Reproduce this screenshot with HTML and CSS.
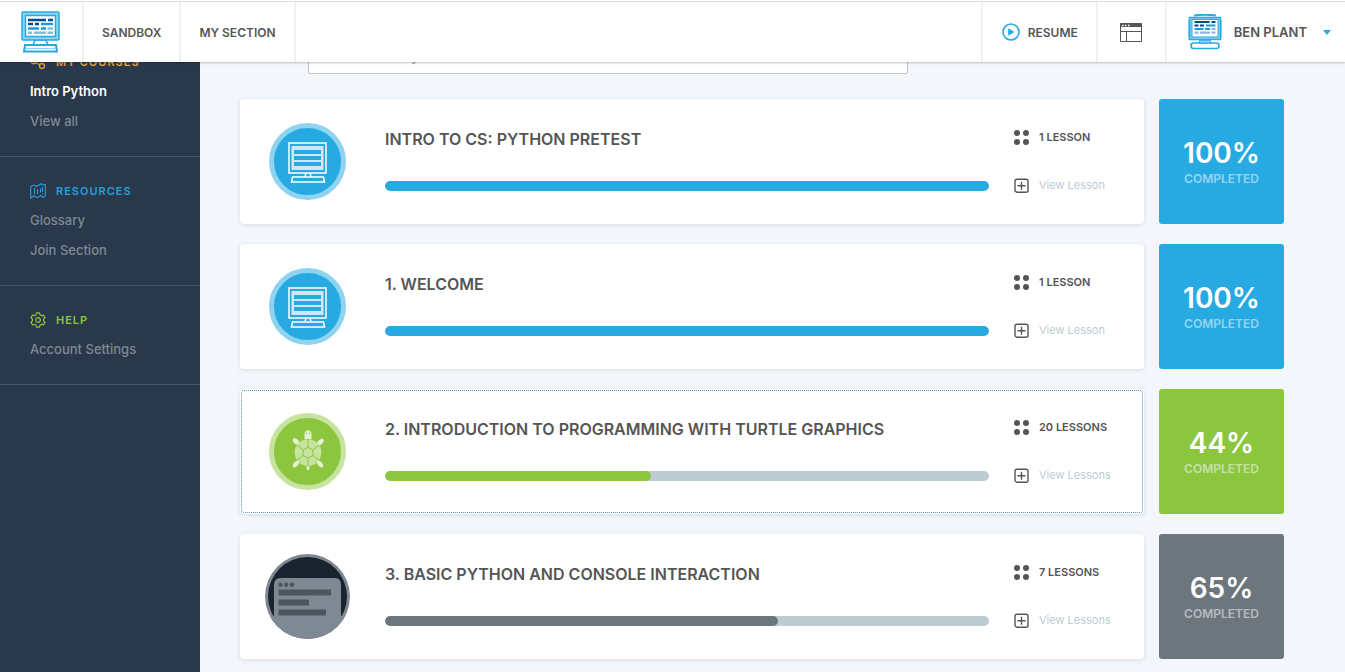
FILE: index.html
```html
<!DOCTYPE html>
<html lang="en">
<head>
<meta charset="utf-8">
<meta name="viewport" content="width=device-width, initial-scale=1">
<title>Intro Python</title>
<link rel="stylesheet" href="styles.css">
</head>
<body>
<svg class="defs" aria-hidden="true">
  <symbol id="logo" viewBox="0 0 40 42">
    <path d="M14 29h11l2 5H12z" fill="#fff" stroke="#27aae1" stroke-width="1.5"/>
    <rect x="1" y="1" width="37" height="28" rx="1" fill="#8ed3f3" stroke="#27aae1" stroke-width="1.5"/>
    <rect x="4.500" y="4.500" width="30" height="21" fill="#fff" stroke="#27aae1" stroke-width="1.500"/>
    <path d="M4 34h31l1 6.500H3z" fill="#fff" stroke="#27aae1" stroke-width="2"/>
    <path d="M4 37.500h31" stroke="#8ed3f3" stroke-width="1"/>
    <path d="M7 9h18M27 9h5M7 13h5M14 13h4" stroke="#004b8d" stroke-width="2.500"/>
    <path d="M20 13h12M7 17.500h11M20 17.500h5" stroke="#1b9bd8" stroke-width="2.500"/>
    <path d="M26.500 17.500h5.500M7 21.700h4M13 21.700h12M26.500 21.700h5.500" stroke="#84bce5" stroke-width="2.500"/>
  </symbol>
  <symbol id="computer" viewBox="0 0 77 77">
    <circle cx="38.500" cy="38.500" r="36" fill="#27aae1" stroke="#8ed3f0" stroke-width="5"/>
    <rect x="20" y="20" width="37" height="30" fill="none" stroke="#fff" stroke-width="1.500"/>
    <rect x="22.500" y="23" width="32" height="24" fill="#d3e6f7"/>
    <path d="M25 29h27M25 35h27M25 41h27" stroke="#27aae1" stroke-width="4"/>
    <path d="M37 50l-1 4M41 50l1 4M23.500 54h31l1 5h-33z" fill="none" stroke="#fff" stroke-width="1.500"/>
  </symbol>
  <symbol id="turtle" viewBox="0 0 77 77">
    <circle cx="38.500" cy="38.500" r="36" fill="#8cc63f" stroke="#c6e3a0" stroke-width="5"/>
    <g fill="#e3f1cf">
      <path d="M35.500 26v-5c0-5 7-5 7 0v5z"/>
      <ellipse cx="27" cy="28.500" rx="2.300" ry="4" transform="rotate(-45 27 28.500)"/>
      <ellipse cx="51.500" cy="29" rx="2.300" ry="4" transform="rotate(45 51.500 29)"/>
      <ellipse cx="27" cy="51" rx="2.300" ry="4" transform="rotate(42 27 51)"/>
      <ellipse cx="51" cy="51" rx="2.300" ry="4" transform="rotate(-42 51 51)"/>
      <ellipse cx="39" cy="55" rx="1.500" ry="2.300"/>
    </g>
    <path d="M37.500 19.500v1.500M40.500 19.500v1.500" stroke="#8cc63f"/>
    <circle cx="39" cy="39.500" r="13.300" fill="#c6e3a0"/>
    <path d="M39 26v8.500M39 44.500V53M39 34.500l5 2.500v5.500l-5 2.500-5-2.500V37zM34 37l-4-3.500-2-1M44 37l4-3.500 2-1M34 42.500l-4 3-2 1M44 42.500l4 3 2 1" fill="none" stroke="#8cc63f" stroke-width="1"/>
  </symbol>
  <symbol id="console" viewBox="0 0 85 85">
    <clipPath id="disc"><circle cx="42.500" cy="42.500" r="42.500"/></clipPath>
    <g clip-path="url(#disc)">
      <rect width="85" height="85" fill="#7f8993"/>
      <circle cx="42.500" cy="42.500" r="39.500" fill="#1a242e"/>
      <path d="M0 62h9V31q0-7 7-7h54q6 0 6 7v31h9v23H0z" fill="#7f8993"/>
      <path d="M13.500 38.500h52.500M13.500 48.500h30.500M13.500 58.500h47.500" stroke="#4c565f" stroke-width="6"/>
      <g fill="#4c565f"><circle cx="15.500" cy="30.700" r="2.200"/><circle cx="21.200" cy="30.700" r="2.200"/><circle cx="27" cy="30.700" r="2.200"/></g>
    </g>
  </symbol>
  <symbol id="dots" viewBox="0 0 15 15">
    <g fill="#555"><circle cx="3" cy="3" r="3"/><circle cx="12" cy="3" r="3"/><circle cx="3" cy="12" r="3"/><circle cx="12" cy="12" r="3"/></g>
  </symbol>
  <symbol id="plus" viewBox="0 0 15 15">
    <rect x="1" y="1.200" width="13" height="13" rx="2" fill="none" stroke="#555" stroke-width="1.400"/>
    <path d="M3.500 7.700h8M7.500 3.700v8" stroke="#555" stroke-width="1.400"/>
  </symbol>
</svg>

<header class="topbar">
  <a class="brand" href="#" aria-label="Home"><svg class="brand-logo"><use href="#logo"/></svg></a>
  <nav class="tabs">
    <a class="tab" href="#">SANDBOX</a>
    <a class="tab" href="#">MY SECTION</a>
  </nav>
  <div class="actions">
    <a class="action" href="#">
      <svg class="play" viewBox="0 0 18 18"><circle cx="9" cy="9" r="8" fill="none" stroke="#27aae1" stroke-width="1.600"/><path d="M6.200 5.200v7.600L12.500 9z" fill="#27aae1"/></svg>
      RESUME
    </a>
    <button class="action layout" type="button" aria-label="Layout">
      <svg class="window" viewBox="0 0 22 19"><path d="M.5.5h21v18H.5zM.5 8.500h21M6.500 8.500v10" fill="none" stroke="#555"/><path d="M.5.500h21v3.500H.5z" fill="#555"/><path d="M2 2.500h1.500M5 2.500h1.500M8 2.500h1.500" stroke="#fff" stroke-width="1.500"/></svg>
    </button>
    <button class="action user" type="button">
      <svg class="avatar" viewBox="0 0 34 36"><rect x="0" y="4" width="34" height="22" rx="4" fill="#8ed3f3"/><path d="M6 1.500q11-1.500 22 0" fill="none" stroke="#27aae1" stroke-width="2"/><rect x="3" y="29" width="28" height="5.500" rx="2.500" fill="#fff" stroke="#27aae1" stroke-width="1.600"/><path d="M12 26h10l1 3H11z" fill="#8ed3f3" stroke="#27aae1"/><rect x="1.500" y="3.500" width="31" height="22" fill="#8ed3f3" stroke="#27aae1" stroke-width="1.500"/><rect x="4" y="5.500" width="26" height="17.500" fill="#fff" stroke="#27aae1"/><path d="M6.500 8h15M23.500 8h4M6.500 11.500h4M12 11.500h4" stroke="#004b8d" stroke-width="2.200"/><path d="M18 11.500h9.500M6.500 15h9M17 15h5" stroke="#1b9bd8" stroke-width="2.200"/><path d="M23.500 15h4M6.500 18.700h4M12 18.700h10M23.500 18.700h4" stroke="#84bce5" stroke-width="2.200"/></svg>
      <span class="user-name">BEN PLANT</span>
      <svg class="caret" viewBox="0 0 8 5"><path d="M0 0h8L4 5z" fill="#27aae1"/></svg>
    </button>
  </div>
</header>

<div class="page">
  <aside class="sidebar">
    <section class="group">
      <h2 class="group-title courses"><svg class="group-icon" viewBox="0 0 16 16" fill="none" stroke="currentColor" stroke-width="1.300"><circle cx="3.500" cy="7.500" r="2.200"/><circle cx="12" cy="3" r="2.200"/><circle cx="12" cy="12" r="2.500"/><path d="M5.500 6.500l4.500-2.400M5.500 8.500l4.300 2.300"/></svg>MY COURSES</h2>
      <a class="side-link current" href="#">Intro Python</a>
      <a class="side-link" href="#">View all</a>
    </section>
    <section class="group">
      <h2 class="group-title resources"><svg class="group-icon" viewBox="0 0 16 16" fill="none" stroke="currentColor" stroke-width="1.100"><path d="M.7 3.500L4 2l2.500 1.500L9 2l2-1.300L13 2l2.300-.5V13l-2.500 1.300-2-1.800-2 1.200-2.300.8L4 12.700.7 15zM4.500 5v6M7.500 6v5M10.500 5.500v4M12.500 4v5M12.500 10.500v1"/></svg>RESOURCES</h2>
      <a class="side-link" href="#">Glossary</a>
      <a class="side-link" href="#">Join Section</a>
    </section>
    <section class="group">
      <h2 class="group-title help"><svg class="group-icon" viewBox="0 0 16 16" fill="none" stroke="currentColor" stroke-width="1.200"><circle cx="8" cy="8" r="2.300"/><path d="M6.500.8h3l.5 2 1.500.9 2-.6 1.500 2.500L13.600 7v2l1.400 1.400-1.500 2.500-2-.6-1.500.9-.5 2h-3l-.5-2-1.500-.9-2 .6L1 10.400 2.400 9V7L1 5.600l1.500-2.500 2 .6L6 2.800z" stroke-linejoin="round"/></svg>HELP</h2>
      <a class="side-link" href="#">Account Settings</a>
    </section>
  </aside>

  <main class="content">
    <input class="search" type="search" placeholder="Search activity" aria-label="Search">

    <article class="unit blue">
      <div class="card">
        <div class="badge"><svg class="badge-icon"><use href="#computer"/></svg></div>
        <div class="summary">
          <h3 class="title">INTRO TO CS: PYTHON PRETEST</h3>
          <div class="track" role="progressbar" aria-valuenow="100"><div class="fill" style="width:100%"></div></div>
        </div>
        <div class="meta">
          <div class="count"><svg class="meta-icon"><use href="#dots"/></svg>1 LESSON</div>
          <button class="view" type="button"><svg class="meta-icon"><use href="#plus"/></svg>View Lesson</button>
        </div>
      </div>
      <div class="score"><strong class="percent">100%</strong><span class="done">COMPLETED</span></div>
    </article>

    <article class="unit blue">
      <div class="card">
        <div class="badge"><svg class="badge-icon"><use href="#computer"/></svg></div>
        <div class="summary">
          <h3 class="title">1. WELCOME</h3>
          <div class="track" role="progressbar" aria-valuenow="100"><div class="fill" style="width:100%"></div></div>
        </div>
        <div class="meta">
          <div class="count"><svg class="meta-icon"><use href="#dots"/></svg>1 LESSON</div>
          <button class="view" type="button"><svg class="meta-icon"><use href="#plus"/></svg>View Lesson</button>
        </div>
      </div>
      <div class="score"><strong class="percent">100%</strong><span class="done">COMPLETED</span></div>
    </article>

    <article class="unit green">
      <div class="card focused">
        <div class="badge"><svg class="badge-icon"><use href="#turtle"/></svg></div>
        <div class="summary">
          <h3 class="title">2. INTRODUCTION TO PROGRAMMING WITH TURTLE GRAPHICS</h3>
          <div class="track" role="progressbar" aria-valuenow="44"><div class="fill" style="width:44%"></div></div>
        </div>
        <div class="meta">
          <div class="count"><svg class="meta-icon"><use href="#dots"/></svg>20 LESSONS</div>
          <button class="view" type="button"><svg class="meta-icon"><use href="#plus"/></svg>View Lessons</button>
        </div>
      </div>
      <div class="score"><strong class="percent">44%</strong><span class="done">COMPLETED</span></div>
    </article>

    <article class="unit gray">
      <div class="card">
        <div class="badge"><svg class="badge-icon large"><use href="#console"/></svg></div>
        <div class="summary">
          <h3 class="title">3. BASIC PYTHON AND CONSOLE INTERACTION</h3>
          <div class="track" role="progressbar" aria-valuenow="65"><div class="fill" style="width:65%"></div></div>
        </div>
        <div class="meta">
          <div class="count"><svg class="meta-icon"><use href="#dots"/></svg>7 LESSONS</div>
          <button class="view" type="button"><svg class="meta-icon"><use href="#plus"/></svg>View Lessons</button>
        </div>
      </div>
      <div class="score"><strong class="percent">65%</strong><span class="done">COMPLETED</span></div>
    </article>
  </main>
</div>
</body>
</html>
```

FILE: styles.css
```css
* { box-sizing: border-box; }
html { height: 100%; overflow: hidden; }
body {
  display: flex;
  flex-direction: column;
  min-height: 100%;
  margin: 0;
  background: #f3f7fc;
  color: #555;
  font-family: Inter, "Open Sans", sans-serif;
  font-size: 12px;
}
h2, h3 { margin: 0; }
a { color: inherit; text-decoration: none; }
button { border: 0; padding: 0; background: none; color: inherit; font: inherit; cursor: pointer; }
svg { display: block; flex: none; }
.defs { position: absolute; width: 0; height: 0; }

.topbar {
  position: sticky;
  top: 0;
  z-index: 2;
  display: flex;
  height: 62px;
  padding-top: 2px;
  background: linear-gradient(#ddd, #ddd) 0 1px / 100% 1px no-repeat #fff;
  box-shadow: 0 1px 2px rgba(0, 0, 0, .25);
  font-weight: 600;
}
.brand { display: flex; align-items: center; padding: 0 21px; border-right: 2px solid #edf1f5; }
.brand-logo { width: 40px; height: 42px; }
.tabs { display: flex; }
.tab { display: flex; align-items: center; padding: 0 18px; border-right: 2px solid #edf1f5; }
.actions { display: flex; margin-left: auto; }
.action { display: flex; align-items: center; gap: 8px; padding: 0 18px 0 19px; border-left: 2px solid #edf1f5; }
.layout { padding: 0 23px 0 22px; }
.play { width: 18px; height: 18px; }
.window { width: 22px; height: 19px; }
.user { gap: 12px; padding: 0 14px 0 21px; font-size: 13px; font-weight: 600; }
.user-name { padding-right: 4px; }
.avatar { width: 34px; height: 36px; }
.caret { width: 8px; height: 5px; }

/* The page sits partly scrolled beneath the sticky bar. */
.page { display: flex; flex: 1; margin-top: -34px; }

.sidebar { flex: none; width: 200px; background: #29384a; }
.group { padding: 24px 30px 20px; border-bottom: 1px solid #465564; }
.group-title {
  display: flex;
  align-items: center;
  gap: 10px;
  height: 20px;
  margin-bottom: 4px;
  font-size: 11px;
  font-weight: 600;
  letter-spacing: 1px;
}
.group-icon { width: 16px; height: 16px; }
.courses { color: #e6a23c; }
.resources { color: #27a0da; }
.help { color: #8cc63f; }
.side-link { display: block; color: #7f8993; font-size: 13px; font-weight: 500; line-height: 30px; }
.current { color: #fff; font-weight: 600; }

.content { flex: 1; min-width: 0; padding: 0 61px 20px 40px; }
.search {
  display: block;
  width: 600px;
  max-width: 100%;
  height: 46px;
  margin: 0 0 25px 68px;
  padding: 8px 12px 0;
  border: 1px solid #c4c4c4;
  border-radius: 2px;
  background: #fff;
  font: 14px Inter, sans-serif;
}
.search::placeholder { color: #999; }
.unit { display: grid; grid-template-columns: 1fr 125px; gap: 15px; margin-bottom: 20px; }
.card {
  display: grid;
  grid-template-columns: 135px 1fr 155px;
  min-height: 125px;
  border-radius: 4px;
  background: #fff;
  box-shadow: 0 1px 4px rgba(40, 60, 80, .14);
}
.focused { outline: 1px dotted #4f8db8; outline-offset: -2px; }
.badge { display: grid; place-items: center; }
.badge-icon { width: 77px; height: 77px; }
.large { width: 85px; height: 85px; }
.summary { padding: 30px 0 0 10px; }
.title { margin-bottom: 32px; font-size: 16px; font-weight: 600; line-height: 20px; }
.track { height: 10px; overflow: hidden; border-radius: 5px; background: #bdcbd3; }
.fill { height: 100%; border-radius: 5px; background: var(--tone); }
.meta { display: flex; flex-direction: column; gap: 28px; padding: 28px 0 0 25px; }
.count, .view { display: flex; align-items: center; gap: 10px; height: 20px; }
.count { font-size: 11px; font-weight: 600; }
.view { color: #bdcbd3; font-size: 11px; }
.meta-icon { width: 15px; height: 15px; }
.score {
  display: flex;
  flex-direction: column;
  align-items: center;
  padding-top: 36px;
  border-radius: 3px;
  background: var(--tone);
  color: #fff;
}
.percent { font-size: 28px; font-weight: 600; line-height: 36px; }
.done { font-size: 12px; font-weight: 600; line-height: 16px; opacity: .5; }
.blue { --tone: #27aae1; }
.green { --tone: #8cc63f; }
.gray { --tone: #6d757d; }
```
